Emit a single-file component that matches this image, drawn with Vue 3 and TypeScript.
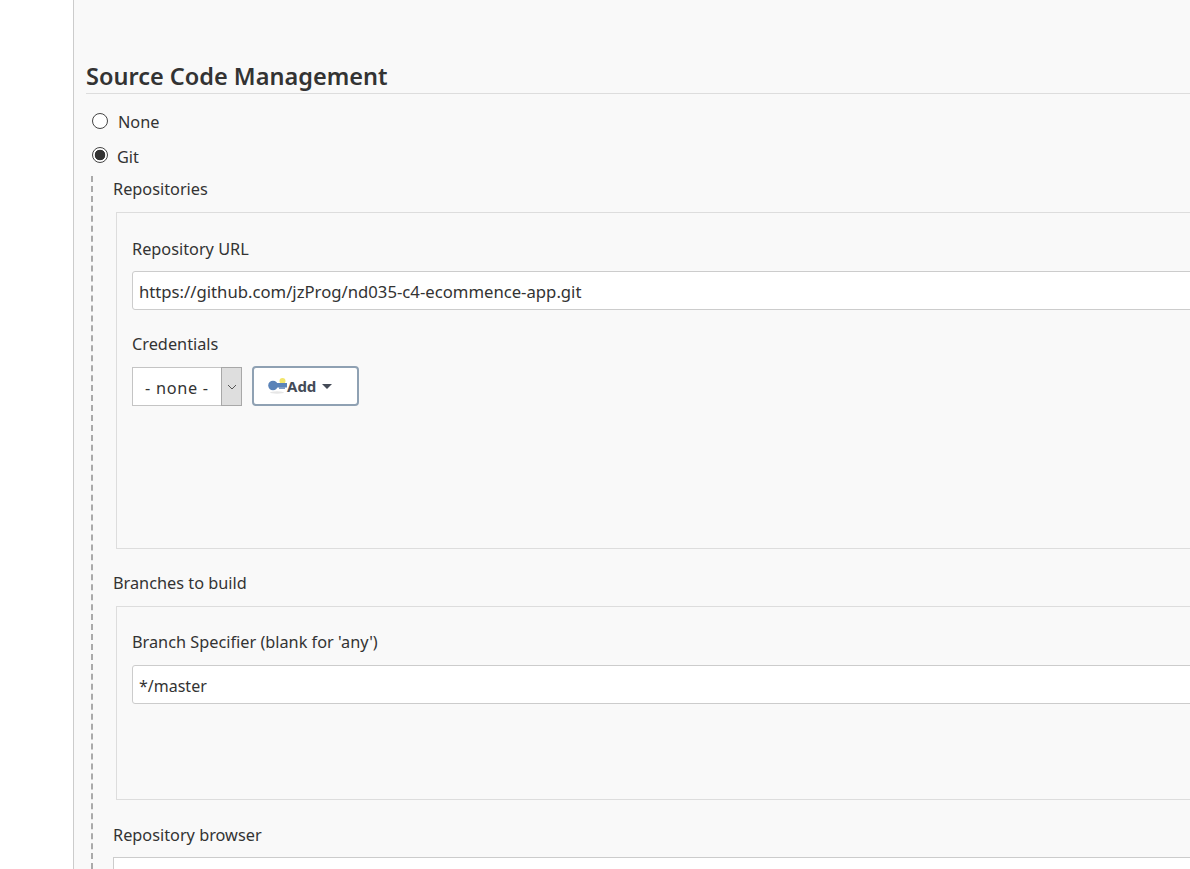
<template>
  <div class="page">
    <aside class="side"></aside>
    <main class="main">
      <h2 class="section-title">Source Code Management</h2>

      <label class="radio-row none-row">
        <span class="radio"></span>
        <span>None</span>
      </label>
      <label class="radio-row git-row">
        <span class="radio checked"></span>
        <span>Git</span>
      </label>

      <div class="git-body">
        <div class="group-label">Repositories</div>
        <div class="panel repo-panel">
          <div class="field-label">Repository URL</div>
          <input class="text-input" type="text" :value="repoUrl" />
          <div class="field-label creds-label">Credentials</div>
          <div class="creds-row">
            <div class="select">
              <span class="select-value">- none -</span>
              <span class="select-arrow">
                <svg width="10" height="6" viewBox="0 0 10 6">
                  <path d="M1 1l4 4 4-4" fill="none" stroke="#555" stroke-width="1" />
                </svg>
              </span>
            </div>
            <button class="add-btn" type="button">
              <svg class="key" width="20" height="18" viewBox="0 0 20 18">
                <ellipse cx="9" cy="15.5" rx="7" ry="1.2" fill="#e6e6e6" />
                <circle cx="14.5" cy="4" r="3" fill="#f2e56b" />
                <circle cx="5" cy="8.5" r="4.8" fill="#5a83b8" />
                <rect x="7" y="6" width="12" height="4.5" fill="#5a83b8" />
                <rect x="11" y="10" width="6" height="2" fill="#7f9cc4" />
              </svg>
              <span>Add</span>
              <span class="caret"></span>
            </button>
          </div>
        </div>

        <div class="group-label branches-label">Branches to build</div>
        <div class="panel branch-panel">
          <div class="field-label">Branch Specifier (blank for 'any')</div>
          <input class="text-input branch-input" type="text" value="*/master" />
        </div>

        <div class="group-label browser-label">Repository browser</div>
        <div class="browser-select"></div>
      </div>
    </main>
  </div>
</template>

<script setup lang="ts">
const repoUrl = 'https://github.com/jzProg/nd035-c4-ecommence-app.git'
</script>

<style>
html, body { margin: 0; overflow: hidden; }
</style>

<style scoped>
.page {
  display: flex;
  width: 1190px;
  height: 869px;
  overflow: hidden;
  background: #fff;
  font-family: "Noto Sans", "Open Sans", sans-serif;
  font-size: 16.3px;
  color: #333;
}

.side {
  flex: 0 0 73px;
  background: #fff;
  border-right: 1px solid #ccc;
}

.main {
  flex: 1 0 0;
  min-width: 0;
  overflow: hidden;
  background: #f9f9f9;
  padding: 59px 0 0 12px;
}

.section-title {
  margin: 0;
  height: 34px;
  line-height: 34px;
  font-size: 23.5px;
  font-weight: 600;
  color: #333;
  border-bottom: 1px solid #ddd;
}

.radio-row {
  display: flex;
  align-items: center;
  height: 20px;
  padding-left: 6px;
  line-height: 20px;
}

.none-row { margin-top: 18px; gap: 10px; }
.git-row { margin-top: 15px; gap: 9px; }

.radio {
  box-sizing: border-box;
  width: 16px;
  height: 16px;
  border: 1px solid #444;
  border-radius: 50%;
  background: #fff;
  margin-top: -2px;
}

.git-row .radio { margin-top: -4px; }

.radio.checked {
  background: radial-gradient(circle, #333 0, #333 5px, #fff 5.6px);
}

.git-body {
  margin: 9px 0 0 5px;
  padding: 3px 0 0 20px;
  border-left: 2px dashed #aaa;
  height: 700px;
}

.group-label {
  line-height: 20px;
  height: 20px;
  color: #333;
}

.panel {
  box-sizing: border-box;
  width: 1200px;
  margin-left: 3px;
  padding: 26px 0 0 15px;
  border: 1px solid #ddd;
  background: #f9f9f9;
}

.repo-panel { margin-top: 13px; height: 337px; }
.branch-panel { margin-top: 13px; height: 194px; padding-top: 25px; }
.branches-label { margin-top: 24px; }
.browser-label { margin-top: 25px; }

.field-label {
  line-height: 20px;
  height: 20px;
}

.creds-label { margin-top: 24px; }

.text-input {
  display: block;
  box-sizing: border-box;
  width: 1180px;
  height: 39px;
  margin-top: 12px;
  padding: 2px 6px 0;
  border: 1px solid #ccc;
  border-radius: 3px 0 0 3px;
  background: #fff;
  font: inherit;
  font-size: 16.7px;
  color: #333;
  outline: none;
}

.branch-input { margin-top: 13px; font-size: 16px; }

.creds-row {
  display: flex;
  align-items: flex-start;
  gap: 10px;
  margin-top: 12px;
}

.select {
  box-sizing: border-box;
  display: flex;
  width: 110px;
  height: 39px;
  margin-top: 1px;
  border: 1px solid #c4c4c4;
  background: #fff;
}

.select-value {
  flex: 1;
  padding: 0 0 0 12px;
  line-height: 40px;
  white-space: nowrap;
  letter-spacing: 0.7px;
}

.select-arrow {
  box-sizing: border-box;
  display: flex;
  align-items: center;
  justify-content: center;
  width: 21px;
  margin: -1px -1px -1px 0;
  background: #dedede;
  border: 1px solid #a8a8a8;
}

.add-btn {
  box-sizing: border-box;
  display: flex;
  align-items: center;
  width: 107px;
  height: 40px;
  padding: 0 0 0 14px;
  border: 2px solid #8fa1b3;
  border-radius: 4px;
  background: #fff;
  font-family: "Noto Sans", "Open Sans", sans-serif;
  font-size: 15px;
  font-weight: 700;
  color: #444b57;
}

.key { flex: none; margin-right: -1px; }

.caret {
  width: 0;
  height: 0;
  margin-left: 6px;
  border-left: 5px solid transparent;
  border-right: 5px solid transparent;
  border-top: 5px solid #444b57;
}

.browser-select {
  box-sizing: border-box;
  width: 1200px;
  height: 39px;
  margin-top: 12px;
  border: 1px solid #ccc;
  background: #fff;
}
</style>
